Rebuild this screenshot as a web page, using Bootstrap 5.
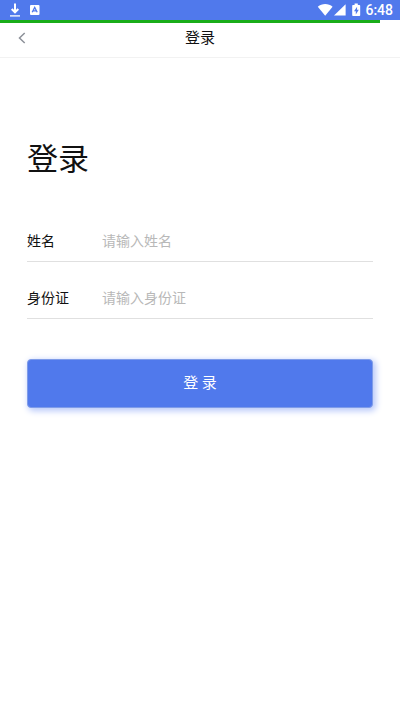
<!DOCTYPE html>
<html lang="zh-CN">
<head>
<meta charset="utf-8">
<meta name="viewport" content="width=device-width, initial-scale=1">
<title>登录</title>
<link href="https://cdn.jsdelivr.net/npm/bootstrap@5.3.0/dist/css/bootstrap.min.css" rel="stylesheet">
<style>
body { font-family: Roboto, "Noto Sans CJK SC", sans-serif; font-size: 14px; line-height: 20px; color: #111; background: #fff; }
.status-bar { height: 20px; padding: 0 7px 0 9px; background: #5079ec; color: #fff; }
.clock { font-size: 14px; font-weight: 500; margin-left: 4px; }
.page-head { height: 38px; border-bottom: 1px solid #f2f2f2; }
.load-progress { height: 3px; border-radius: 0; background: transparent; }
.load-progress .progress-bar { background: #19ad19; }
.back-btn { width: 44px; line-height: 0; }
.page-name { font-size: 15px; line-height: 30px; }
.login-main { padding: 82px 27px 24px; }
.login-title { font-size: 31px; line-height: 40px; font-weight: 400; margin-bottom: 41px; }
.field-row { height: 41px; border-bottom: 1px solid #e0e0e0; margin-bottom: 16px; }
.field-row label { width: 75px; }
.field-row .form-control { font-size: 14px; line-height: 20px; border-radius: 0; }
.field-row .form-control::placeholder { color: #b8b8b8; }
.login-btn { height: 49px; margin-top: 24px; font-size: 15px; color: #fff; border-radius: 4px; box-shadow: 2px 2px 6px 1px #b9c9fa;
  --bs-btn-bg: #5079ec; --bs-btn-border-color: #7f9ce8; --bs-btn-color: #fff; --bs-btn-hover-bg: #446ee3; --bs-btn-hover-color: #fff; }
</style>
</head>
<body class="min-vh-100">
<div class="status-bar d-flex align-items-center justify-content-between">
  <div class="d-flex align-items-center gap-2">
    <svg width="12" height="14" viewBox="0 0 12 14" aria-hidden="true"><path d="M6 .5v8M2.7 6L6 9.3 9.3 6" fill="none" stroke="#fff" stroke-width="2"/><path d="M1 12.9h10" stroke="#fff" stroke-width="1.3"/></svg>
    <svg width="11" height="12" viewBox="0 0 11 12" aria-hidden="true"><rect x="1" y="1" width="9.5" height="10" rx="1" fill="#fff"/><path d="M3.2 8.3L5.7 3.4l2.5 4.9M4.4 6.9h2.7" fill="none" stroke="#5079ec" stroke-width="1.3"/></svg>
  </div>
  <div class="d-flex align-items-center">
    <svg width="44" height="14" viewBox="0 0 44 14" aria-hidden="true"><path d="M.8 3.7C4.8.1 11.6.1 15.6 3.7L8.2 12.8z" fill="#fff"/><path d="M28.6 1.2v11.4H17z" fill="#fff"/><path d="M36 2h1.6V.5h3.2V2h1.6q.8 0 .8.8v9.4q0 .8-.8.8H36q-.8 0-.8-.8V2.8Q35.2 2 36 2z" fill="#fff"/><path d="M40.1 3.7L37 8.2h1.8v3.2l3-4.6H40z" fill="#5079ec"/></svg>
    <span class="clock">6:48</span>
  </div>
</div>
<header class="page-head">
  <div class="progress load-progress" role="progressbar" aria-label="加载进度" aria-valuenow="95" aria-valuemin="0" aria-valuemax="100">
    <div class="progress-bar" style="width: 95%"></div>
  </div>
  <div class="d-flex">
    <button type="button" class="back-btn btn border-0 p-0 flex-shrink-0" aria-label="返回"><svg width="8" height="12" viewBox="0 0 8 12" aria-hidden="true"><path d="M6.7 1L1.5 6l5.2 5" fill="none" stroke="#8d9199" stroke-width="1.5"/></svg></button>
    <div class="page-name flex-grow-1 text-center">登录</div>
    <div class="back-btn flex-shrink-0"></div>
  </div>
</header>
<main class="login-main">
  <h1 class="login-title">登录</h1>
  <form>
    <div class="field-row d-flex align-items-center">
      <label for="name" class="flex-shrink-0">姓名</label>
      <input id="name" type="text" class="form-control border-0 p-0 shadow-none" placeholder="请输入姓名">
    </div>
    <div class="field-row d-flex align-items-center">
      <label for="idcard" class="flex-shrink-0">身份证</label>
      <input id="idcard" type="text" class="form-control border-0 p-0 shadow-none" placeholder="请输入身份证">
    </div>
    <button type="submit" class="login-btn btn w-100 p-0">登 录</button>
  </form>
</main>
<script src="https://cdn.jsdelivr.net/npm/bootstrap@5.3.0/dist/js/bootstrap.bundle.min.js"></script>
</body>
</html>
